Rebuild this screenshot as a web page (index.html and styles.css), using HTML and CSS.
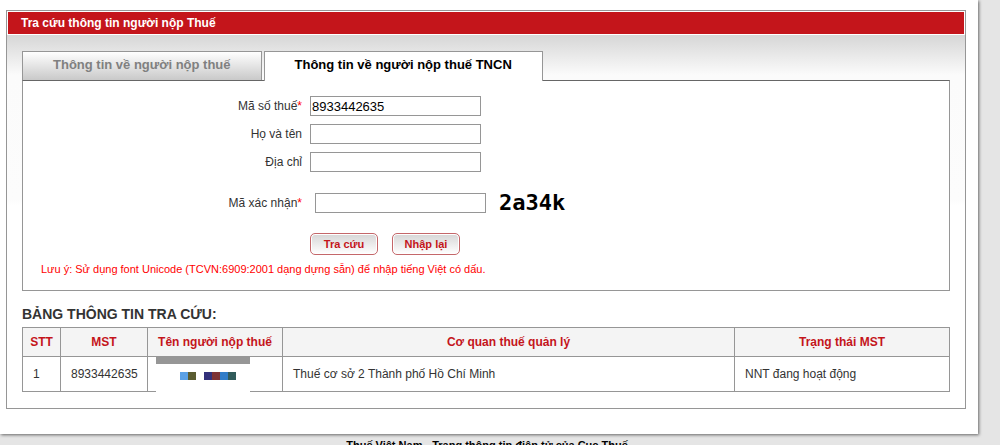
FILE: index.html
```html
<!DOCTYPE html>
<html lang="vi">
<head>
<meta charset="utf-8">
<title>Tra cứu thông tin người nộp Thuế</title>
<link rel="stylesheet" href="styles.css">
</head>
<body>
<main class="sheet">
  <section class="panel">
    <h1 class="panel-title">Tra cứu thông tin người nộp Thuế</h1>
    <div class="panel-body">
      <nav class="tabs">
        <button type="button" class="tab">Thông tin về người nộp thuế</button>
        <button type="button" class="tab tab-active">Thông tin về người nộp thuế TNCN</button>
      </nav>
      <form class="search">
        <div class="row">
          <label for="mst">Mã số thuế<span class="required">*</span></label>
          <input id="mst" type="text" value="8933442635">
        </div>
        <div class="row">
          <label for="name">Họ và tên</label>
          <input id="name" type="text">
        </div>
        <div class="row">
          <label for="address">Địa chỉ</label>
          <input id="address" type="text">
        </div>
        <div class="row row-captcha">
          <label for="code">Mã xác nhận<span class="required">*</span></label>
          <div class="captcha">
            <input id="code" type="text">
            <span class="captcha-code">2a34k</span>
          </div>
        </div>
        <div class="actions">
          <button type="button" class="action">Tra cứu</button>
          <button type="reset" class="action">Nhập lại</button>
        </div>
        <p class="note">Lưu ý: Sử dụng font Unicode (TCVN:6909:2001 dạng dựng sẵn) để nhập tiếng Việt có dấu.</p>
      </form>
      <h2 class="result-title">BẢNG THÔNG TIN TRA CỨU:</h2>
      <table class="result">
        <colgroup>
          <col class="col-index"><col class="col-mst"><col class="col-name"><col><col class="col-status">
        </colgroup>
        <thead>
          <tr><th>STT</th><th>MST</th><th>Tên người nộp thuế</th><th>Cơ quan thuế quản lý</th><th>Trạng thái MST</th></tr>
        </thead>
        <tbody>
          <tr>
            <td>1</td>
            <td>8933442635</td>
            <td class="masked">
              <svg class="mask" width="94" height="36" viewBox="0 0 94 36" shape-rendering="crispEdges" aria-hidden="true">
                <rect width="94" height="36" fill="#fff"/>
                <rect width="94" height="7" fill="#969696"/>
                <rect x="24" y="15" width="8" height="8" fill="#5ba1e6"/>
                <rect x="32" y="15" width="8" height="8" fill="#5a5c31"/>
                <rect x="48" y="15" width="8" height="8" fill="#33317b"/>
                <rect x="56" y="15" width="8" height="8" fill="#7e3335"/>
                <rect x="64" y="15" width="8" height="8" fill="#317dc8"/>
                <rect x="72" y="15" width="8" height="8" fill="#315b5a"/>
              </svg>
            </td>
            <td>Thuế cơ sở 2 Thành phố Hồ Chí Minh</td>
            <td>NNT đang hoạt động</td>
          </tr>
        </tbody>
      </table>
    </div>
  </section>
</main>
<footer class="footer">Thuế Việt Nam - Trang thông tin điện tử của Cục Thuế</footer>
</body>
</html>
```
FILE: styles.css
```css
* {
  box-sizing: border-box;
}

body {
  margin: 0;
  background: #e5e5e5;
  color: #333;
  font: 12px/16px "Liberation Sans", Arial, sans-serif;
}

.sheet {
  margin-right: 22px;
  padding: 10px 12px 25px 6px;
  background: #fff;
  box-shadow: 1px 1px 3px #666;
}

.panel {
  padding: 1px;
  border: 1px solid #969696;
}

.panel-title {
  margin: 0;
  padding: 3px 13px;
  background: #c4151b;
  color: #fff;
  font-size: 12px;
  line-height: 16px;
}

.panel-body {
  margin: 1px -1px 0;
  padding: 16px 15px 15px;
  background: linear-gradient(#d6d6d6, #fbfbfb 40px, #fcfcfc 165px, #fff 170px);
}

.tabs {
  display: flex;
  gap: 2px;
}

.tab {
  height: 29px;
  padding: 0 30px 2px;
  border: 1px solid #969696;
  border-bottom: 0;
  background: linear-gradient(#fff, #c9c9c9);
  color: #808080;
  font: bold 13px/16px "Liberation Sans", Arial, sans-serif;
}

.tab-active {
  height: 30px;
  margin-bottom: -1px;
  padding-bottom: 3px;
  background: #fff;
  color: #000;
  position: relative;
}

.search {
  display: flex;
  flex-direction: column;
  gap: 8px;
  padding: 15px 18px 15px 0;
  border: 1px solid #969696;
  border-top-color: #666;
  background: #fff;
}

.row {
  display: grid;
  grid-template-columns: 279px 1fr;
  column-gap: 8px;
  align-items: center;
}

.row label {
  text-align: right;
}

.row input {
  width: 171px;
  height: 20px;
  padding: 0 1px;
  border: 1px solid #969696;
  background: #fff;
  color: #000;
  font: 13px "Liberation Sans", Arial, sans-serif;
}

.required {
  color: #f00;
}

.row-captcha {
  margin-top: 9px;
}

.captcha {
  display: flex;
  align-items: center;
  gap: 13px;
  padding-left: 5px;
}

.captcha-code {
  color: #000;
  font: bold 22px/28px "DejaVu Sans Mono", monospace;
}

.actions {
  display: flex;
  gap: 14px;
  margin-top: 8px;
  padding-left: 287px;
}

.action {
  min-width: 68px;
  height: 22px;
  padding: 0 11px;
  border: 1px solid #c4676a;
  border-radius: 5px;
  background: linear-gradient(#d6d6d6, #fff);
  box-shadow: inset 0 0 0 1px #fff;
  color: #c4151b;
  font: bold 11px/16px "Liberation Sans", Arial, sans-serif;
}

.note {
  margin: 0;
  padding-left: 18px;
  color: #f00;
  font-size: 11px;
  line-height: 12px;
}

.result-title {
  margin: 14px 0 4px;
  font-size: 14px;
  line-height: 18px;
}

.result {
  width: 100%;
  border-collapse: collapse;
  table-layout: fixed;
  background: #fff;
}

.result th,
.result td {
  border: 1px solid #969696;
}

.result th {
  height: 29px;
  padding: 0;
  background: #f4f4f4;
  color: #c4151b;
}

.result td {
  height: 35px;
  padding: 0 10px;
}

.col-index {
  width: 38px;
}

.col-mst {
  width: 87px;
}

.col-name {
  width: 135px;
}

.col-status {
  width: 215px;
}

.masked {
  position: relative;
}

.mask {
  position: absolute;
  top: 0;
  left: 8px;
}

.footer {
  margin-right: 26px;
  padding-top: 3px;
  color: #000;
  font-size: 11px;
  font-weight: bold;
  text-align: center;
}
```
